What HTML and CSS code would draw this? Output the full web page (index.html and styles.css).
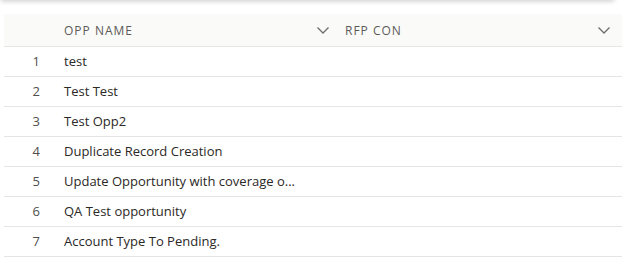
FILE: index.html
```html
<!DOCTYPE html>
<html>
<head>
<meta charset="utf-8">
<link rel="stylesheet" href="styles.css">
</head>
<body>
<div class="card"></div>
<div class="grid">
  <div class="row head">
    <div class="num"></div>
    <div class="col name"><span class="label">OPP NAME</span><svg class="chev" viewBox="0 0 12 7"><path d="M0.5 0.5 L6 6 L11.5 0.5" fill="none" stroke="#706e6b" stroke-width="1.3"/></svg></div>
    <div class="col rfp"><span class="label">RFP CON</span><svg class="chev" viewBox="0 0 12 7"><path d="M0.5 0.5 L6 6 L11.5 0.5" fill="none" stroke="#706e6b" stroke-width="1.3"/></svg></div>
  </div>
  <div class="row"><div class="num">1</div><div class="col name">test</div><div class="col rfp"></div></div>
  <div class="row"><div class="num">2</div><div class="col name">Test Test</div><div class="col rfp"></div></div>
  <div class="row"><div class="num">3</div><div class="col name">Test Opp2</div><div class="col rfp"></div></div>
  <div class="row"><div class="num">4</div><div class="col name">Duplicate Record Creation</div><div class="col rfp"></div></div>
  <div class="row"><div class="num">5</div><div class="col name"><span class="trunc">Update Opportunity with coverage o...</span></div><div class="col rfp"></div></div>
  <div class="row"><div class="num">6</div><div class="col name">QA Test opportunity</div><div class="col rfp"></div></div>
  <div class="row"><div class="num">7</div><div class="col name">Account Type To Pending.</div><div class="col rfp"></div></div>
</div>
</body>
</html>
```
FILE: styles.css
```css
html, body {
  margin: 0;
  padding: 0;
  background: #ffffff;
}
body {
  font-family: "Open Sans", "Noto Sans", sans-serif;
  color: #2b2826;
  overflow: hidden;
}
.card {
  width: 615px;
  height: 20px;
  margin-top: -20px;
  background: #ffffff;
  border-radius: 0 0 4px 4px;
  box-shadow: 0 2px 4px rgba(0, 0, 0, 0.16);
}
.grid {
  margin: 14px 0 0 4px;
  width: 618px;
}
.row {
  display: flex;
  height: 27px;
  padding-bottom: 2px;
  align-items: center;
  border-bottom: 1px solid #e5e5e5;
  font-size: 13px;
}
.row.head {
  height: 32px;
  padding-bottom: 0;
  background: #fafaf9;
  color: #5c5a58;
  font-size: 12px;
  letter-spacing: 1px;
}
.num {
  width: 36px;
  padding-right: 16px;
  text-align: right;
  color: #514f4d;
}
.col {
  display: flex;
  align-items: center;
  justify-content: space-between;
  padding: 0 8px;
  box-sizing: border-box;
  white-space: nowrap;
}
.name {
  width: 281px;
}
.rfp {
  width: 285px;
  padding-right: 12px;
}
.chev {
  width: 12px;
  height: 7px;
  display: block;
}
```
